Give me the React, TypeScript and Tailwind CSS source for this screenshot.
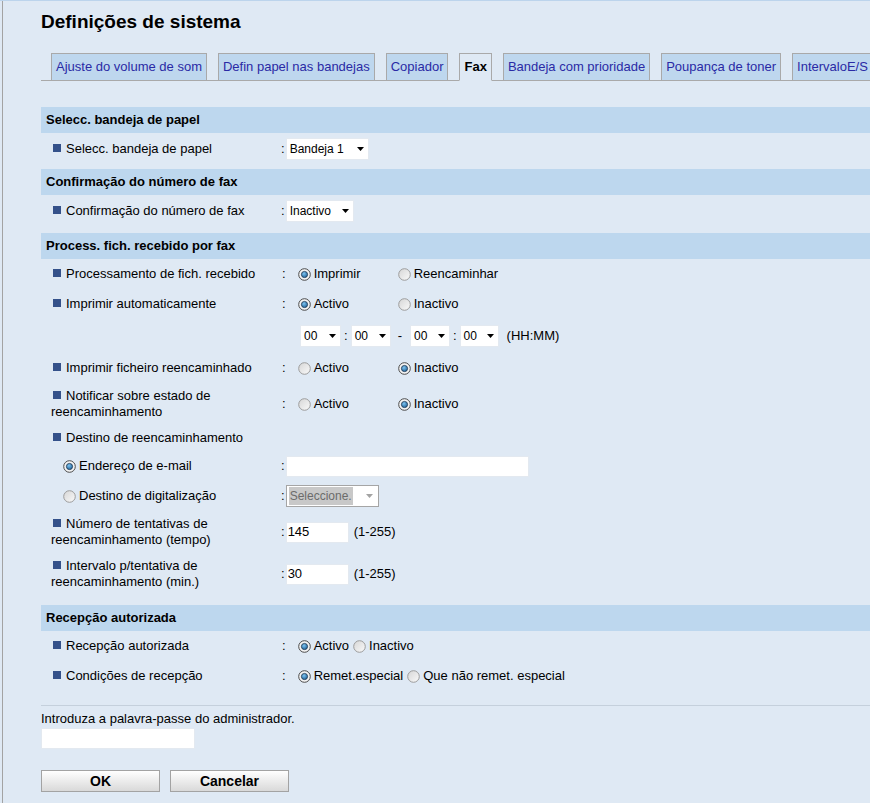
import React from 'react'

const tabs = [
  'Ajuste do volume de som',
  'Defin papel nas bandejas',
  'Copiador',
  'Fax',
  'Bandeja com prioridade',
  'Poupança de toner',
  'IntervaloE/S',
]

function Radio({ checked }: { checked?: boolean }) {
  return (
    <svg width="13" height="13" viewBox="0 0 13 13" className="shrink-0">
      <defs>
        <linearGradient id="radioOff" x1="0" y1="0" x2="1" y2="1">
          <stop offset="0" stopColor="#d6d6d6" />
          <stop offset="1" stopColor="#fafafa" />
        </linearGradient>
        <radialGradient id="radioDot" cx="0.4" cy="0.35" r="0.7">
          <stop offset="0" stopColor="#7fc4f0" />
          <stop offset="1" stopColor="#1b5f96" />
        </radialGradient>
      </defs>
      {checked ? (
        <>
          <circle cx="6.5" cy="6.5" r="5.8" fill="#f4f4f4" stroke="#4a4a4a" strokeWidth="1" />
          <circle cx="6.5" cy="6.5" r="3.1" fill="url(#radioDot)" stroke="#20364f" strokeWidth="0.8" />
        </>
      ) : (
        <circle cx="6.5" cy="6.5" r="5.8" fill="url(#radioOff)" stroke="#9c9c9c" strokeWidth="1" />
      )}
    </svg>
  )
}

function Option({ checked, text, cell }: { checked?: boolean; text: string; cell?: boolean }) {
  return (
    <span className={cell ? 'flex items-center gap-[3px] w-[100px]' : 'flex items-center gap-[3px] mr-[4px]'}>
      <Radio checked={checked} />
      <span>{text}</span>
    </span>
  )
}

function Select({ value, width }: { value: string; width: string }) {
  return (
    <div className={`flex items-center justify-between bg-white border border-[#e3e9f0] h-[22px] pl-[3px] pr-[4px] text-[12px] ${width}`}>
      <span>{value}</span>
      <svg width="7" height="4" viewBox="0 0 7 4">
        <path d="M0 0h7L3.5 4z" fill="#000" />
      </svg>
    </div>
  )
}

function Label({ children }: { children: React.ReactNode }) {
  return (
    <span>
      <span className="inline-block w-2 h-2 bg-[#34518a] ml-[2px] mr-[5px] align-[1px]" />
      {children}
    </span>
  )
}

function Row({ label, height, children }: { label: React.ReactNode; height: string; children?: React.ReactNode }) {
  return (
    <div className={`flex items-center ${height}`}>
      <div className="w-[230px] ml-[10px] leading-[16px] shrink-0">{label}</div>
      <div className="flex items-center">{children}</div>
    </div>
  )
}

function Header({ title }: { title: string }) {
  return (
    <div className="h-[26px] bg-[#bdd7ee] flex items-center pl-[5px] font-bold">{title}</div>
  )
}

const RadioColon = () => <span className="ml-[1px] mr-[12px]">:</span>
const Colon = () => <span className="mr-[1px]">:</span>

export default function App() {
  return (
    <div className="min-h-[803px] w-full overflow-hidden bg-[#dfe9f4] border-t border-[#bcd4ec] font-['Liberation_Sans',Arial,sans-serif] text-[13px] text-black">
      <div className="ml-[2px] border-l border-[#a3a3a3] pl-[38px] min-h-[802px]">
        <h1 className="pt-[10px] text-[19px] font-bold leading-[22px]">Definições de sistema</h1>

        <div className="mt-[20px] flex gap-[11px] pl-[10px] border-b border-[#a9a9a9] whitespace-nowrap">
          {tabs.map(t => (
            <div
              key={t}
              className={
                t === 'Fax'
                  ? 'shrink-0 h-[28px] -mb-px px-[4px] flex items-center border border-[#a9a9a9] border-b-[#dfe9f4] bg-[#dfe9f4] font-bold'
                  : 'shrink-0 h-[28px] -mb-px px-[4px] flex items-center border border-[#a9a9a9] bg-[#bed7ee] text-[#2a2aa5]'
              }
            >
              {t}
            </div>
          ))}
        </div>

        <div className="mt-[26px]">
          <Header title="Selecc. bandeja de papel" />
          <Row label={<Label>Selecc. bandeja de papel</Label>} height="h-[32px]">
            <Colon />
            <Select value="Bandeja 1" width="w-[83px]" />
          </Row>
        </div>

        <div className="mt-[4px]">
          <Header title="Confirmação do número de fax" />
          <Row label={<Label>Confirmação do número de fax</Label>} height="h-[32px]">
            <Colon />
            <Select value="Inactivo" width="w-[68px]" />
          </Row>
        </div>

        <div className="mt-[6px]">
          <Header title="Process. fich. recebido por fax" />
          <Row label={<Label>Processamento de fich. recebido</Label>} height="h-[30px]">
            <RadioColon />
            <Option cell checked text="Imprimir" />
            <Option cell text="Reencaminhar" />
          </Row>
          <Row label={<Label>Imprimir automaticamente</Label>} height="h-[30px]">
            <RadioColon />
            <Option cell checked text="Activo" />
            <Option cell text="Inactivo" />
          </Row>
          <Row label={null} height="h-[34px]">
            <div className="ml-[19px] flex items-center">
              <Select value="00" width="w-[41px]" />
              <span className="mx-[3px]">:</span>
              <Select value="00" width="w-[40px]" />
              <span className="ml-[7px] mr-[8px]">-</span>
              <Select value="00" width="w-[40px]" />
              <span className="mx-[3px]">:</span>
              <Select value="00" width="w-[39px]" />
              <span className="ml-[8px]">(HH:MM)</span>
            </div>
          </Row>
          <Row label={<Label>Imprimir ficheiro reencaminhado</Label>} height="h-[30px]">
            <RadioColon />
            <Option cell text="Activo" />
            <Option cell checked text="Inactivo" />
          </Row>
          <Row label={<Label>Notificar sobre estado de reencaminhamento</Label>} height="h-[42px]">
            <RadioColon />
            <Option cell text="Activo" />
            <Option cell checked text="Inactivo" />
          </Row>
          <Row label={<Label>Destino de reencaminhamento</Label>} height="h-[26px]" />
          <Row
            label={
              <span className="flex items-center gap-[3px] pl-[12px]">
                <Radio checked />
                <span>Endereço de e-mail</span>
              </span>
            }
            height="h-[30px]"
          >
            <Colon />
            <div className="w-[243px] h-[21px] bg-white border border-[#e3e9f0]" />
          </Row>
          <Row
            label={
              <span className="flex items-center gap-[3px] pl-[12px]">
                <Radio />
                <span>Destino de digitalização</span>
              </span>
            }
            height="h-[30px]"
          >
            <Colon />
            <div className="w-[93px] h-[22px] bg-white border border-[#a5a5a5] flex items-center justify-between pl-[2px] pr-[5px] text-[12px]">
              <span className="bg-[#c8c8c8] text-[#6b6b6b] px-[1px]">Seleccione.</span>
              <svg width="7" height="4" viewBox="0 0 7 4">
                <path d="M0 0h7L3.5 4z" fill="#a3a3a3" />
              </svg>
            </div>
          </Row>
          <Row label={<Label>Número de tentativas de reencaminhamento (tempo)</Label>} height="h-[42px]">
            <Colon />
            <div className="w-[63px] h-[21px] bg-white border border-[#e3e9f0] flex items-center pl-[1px]">145</div>
            <span className="ml-[5px]">(1-255)</span>
          </Row>
          <Row label={<Label>Intervalo p/tentativa de reencaminhamento (min.)</Label>} height="h-[42px]">
            <Colon />
            <div className="w-[63px] h-[21px] bg-white border border-[#e3e9f0] flex items-center pl-[1px]">30</div>
            <span className="ml-[5px]">(1-255)</span>
          </Row>
        </div>

        <div className="mt-[10px]">
          <Header title="Recepção autorizada" />
          <Row label={<Label>Recepção autorizada</Label>} height="h-[30px]">
            <RadioColon />
            <Option checked text="Activo" />
            <Option text="Inactivo" />
          </Row>
          <Row label={<Label>Condições de recepção</Label>} height="h-[30px]">
            <RadioColon />
            <Option checked text="Remet.especial" />
            <Option text="Que não remet. especial" />
          </Row>
        </div>

        <div className="mt-[14px] border-t border-[#c5d0dc]" />
        <p className="mt-[5px] leading-[16px]">Introduza a palavra-passe do administrador.</p>
        <div className="mt-[1px] w-[154px] h-[21px] bg-white border border-[#e3e9f0]" />

        <div className="mt-[21px] flex gap-[10px]">
          <button className="w-[119px] h-[22px] border border-[#a3a3a3] bg-linear-to-b from-white to-[#d9d9d9] font-bold text-[14px] leading-none">
            OK
          </button>
          <button className="w-[119px] h-[22px] border border-[#a3a3a3] bg-linear-to-b from-white to-[#d9d9d9] font-bold text-[14px] leading-none">
            Cancelar
          </button>
        </div>
      </div>
    </div>
  )
}
